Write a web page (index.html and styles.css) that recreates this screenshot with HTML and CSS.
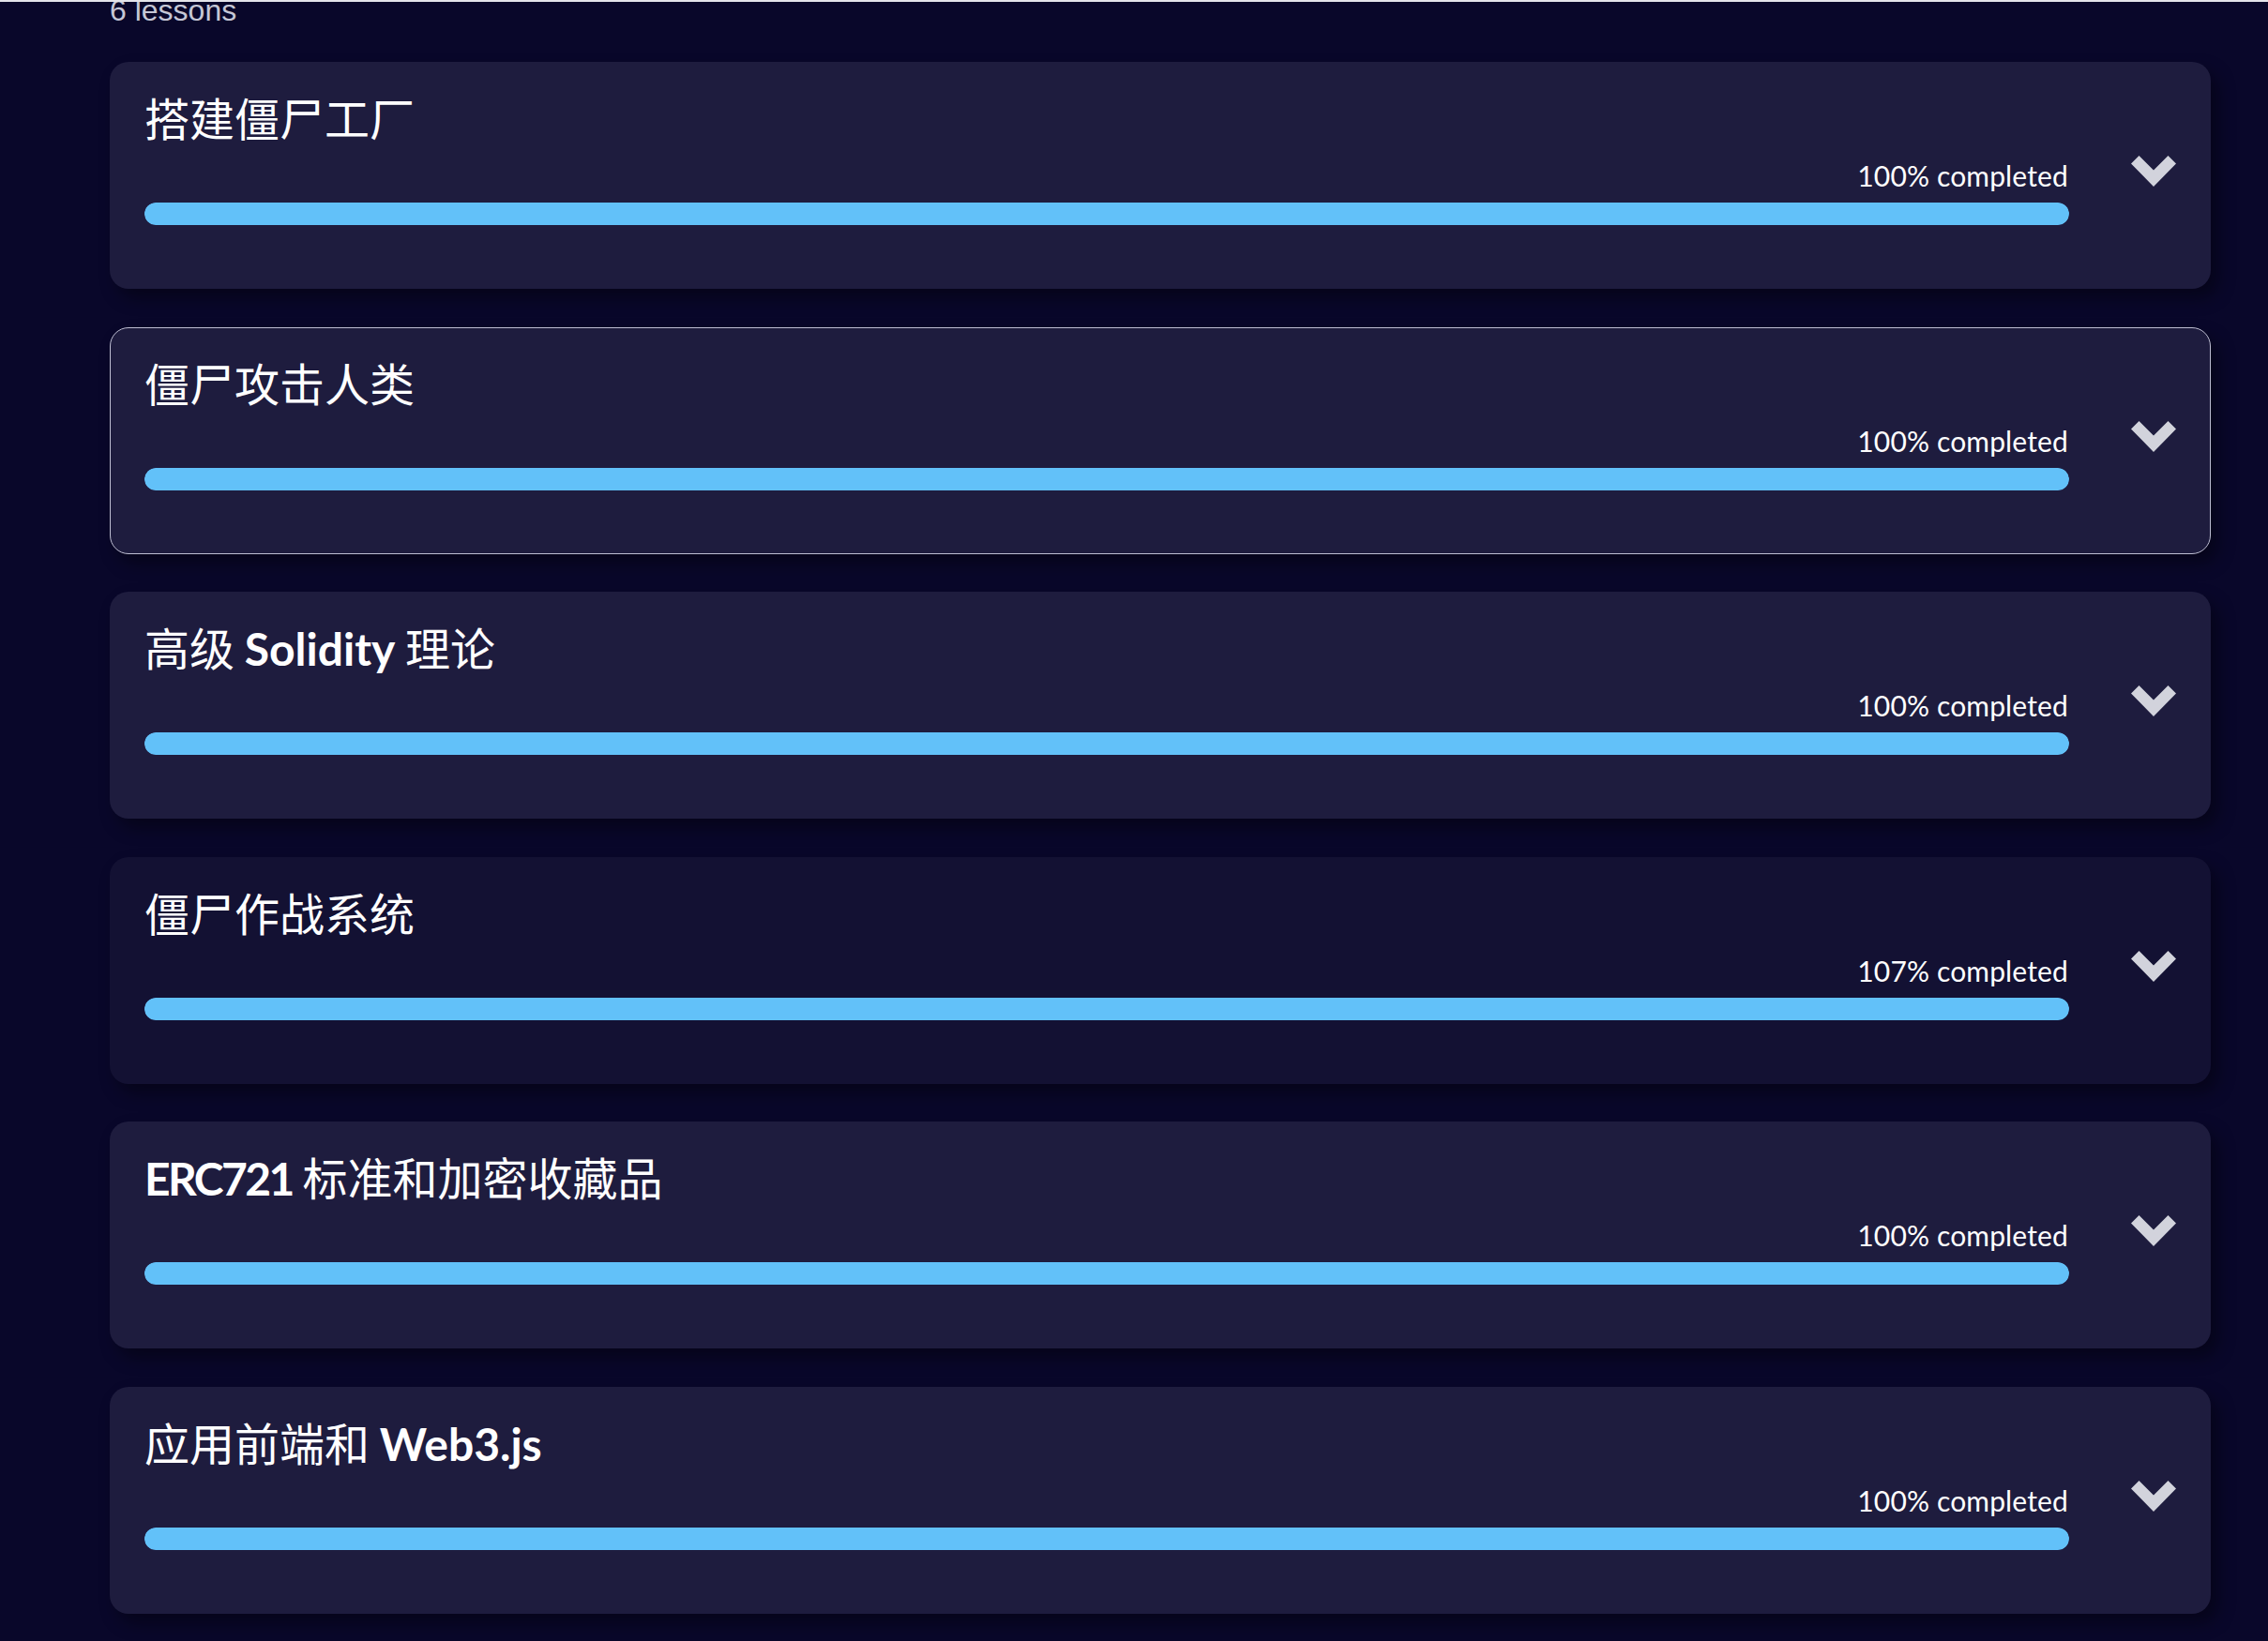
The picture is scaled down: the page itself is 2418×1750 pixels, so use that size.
FILE: index.html
```html
<!DOCTYPE html>
<html lang="zh">
<head>
<meta charset="utf-8">
<title>Lessons</title>
<link rel="stylesheet" href="styles.css">
</head>
<body>
<div class="top-strip"></div>
<main class="course">
  <div class="lesson-count">6 lessons</div>
  <div class="lesson-list">
    <section class="lesson">
      <div class="lesson-main">
        <h2 class="lesson-title">搭建僵尸工厂</h2>
        <div class="progress-label">100% completed</div>
        <div class="progress-track"><div class="progress-fill" style="width:100%"></div></div>
      </div>
      <svg class="chevron" viewBox="0 0 48 33" width="48" height="33" aria-hidden="true"><polygon points="0,8.5 8.5,0 24,15.5 39.5,0 48,8.5 24,33"/></svg>
    </section>
    <section class="lesson lesson-focused">
      <div class="lesson-main">
        <h2 class="lesson-title">僵尸攻击人类</h2>
        <div class="progress-label">100% completed</div>
        <div class="progress-track"><div class="progress-fill" style="width:100%"></div></div>
      </div>
      <svg class="chevron" viewBox="0 0 48 33" width="48" height="33" aria-hidden="true"><polygon points="0,8.5 8.5,0 24,15.5 39.5,0 48,8.5 24,33"/></svg>
    </section>
    <section class="lesson">
      <div class="lesson-main">
        <h2 class="lesson-title">高级 <span class="latin">Solidity</span> 理论</h2>
        <div class="progress-label">100% completed</div>
        <div class="progress-track"><div class="progress-fill" style="width:100%"></div></div>
      </div>
      <svg class="chevron" viewBox="0 0 48 33" width="48" height="33" aria-hidden="true"><polygon points="0,8.5 8.5,0 24,15.5 39.5,0 48,8.5 24,33"/></svg>
    </section>
    <section class="lesson lesson-hover">
      <div class="lesson-main">
        <h2 class="lesson-title">僵尸作战系统</h2>
        <div class="progress-label">107% completed</div>
        <div class="progress-track"><div class="progress-fill" style="width:100%"></div></div>
      </div>
      <svg class="chevron" viewBox="0 0 48 33" width="48" height="33" aria-hidden="true"><polygon points="0,8.5 8.5,0 24,15.5 39.5,0 48,8.5 24,33"/></svg>
    </section>
    <section class="lesson">
      <div class="lesson-main">
        <h2 class="lesson-title"><span class="latin tight">ERC721</span> 标准和加密收藏品</h2>
        <div class="progress-label">100% completed</div>
        <div class="progress-track"><div class="progress-fill" style="width:100%"></div></div>
      </div>
      <svg class="chevron" viewBox="0 0 48 33" width="48" height="33" aria-hidden="true"><polygon points="0,8.5 8.5,0 24,15.5 39.5,0 48,8.5 24,33"/></svg>
    </section>
    <section class="lesson">
      <div class="lesson-main">
        <h2 class="lesson-title">应用前端和 <span class="latin">Web3.js</span></h2>
        <div class="progress-label">100% completed</div>
        <div class="progress-track"><div class="progress-fill" style="width:100%"></div></div>
      </div>
      <svg class="chevron" viewBox="0 0 48 33" width="48" height="33" aria-hidden="true"><polygon points="0,8.5 8.5,0 24,15.5 39.5,0 48,8.5 24,33"/></svg>
    </section>
  </div>
</main>
</body>
</html>
```

FILE: styles.css
```css
* {
  box-sizing: border-box;
}

html, body {
  margin: 0;
  padding: 0;
}

body {
  background: #09072a;
  color: #ffffff;
  font-family: "Lato", "Noto Sans CJK SC", sans-serif;
  min-height: 1750px;
  overflow: hidden;
}

.top-strip {
  position: relative;
  z-index: 1;
  height: 2px;
  background: #e4e4ea;
}

.course {
  padding-left: 117px;
  width: 2357px;
}

.lesson-count {
  font-family: "Liberation Sans", Arial, sans-serif;
  font-size: 32px;
  line-height: 18px;
  height: 18px;
  color: #c6c7d6;
  margin-bottom: 46px;
}

.lesson-list {
  display: flex;
  flex-direction: column;
  gap: 40.6px;
}

.lesson {
  display: flex;
  align-items: flex-start;
  gap: 66px;
  height: 242px;
  padding: 34px 36px 68px 36px;
  background: #1e1c3e;
  border: 1px solid transparent;
  border-radius: 20px;
  box-shadow: 8px 10px 18px rgba(0, 0, 0, 0.38);
}

.lesson-focused {
  border-color: #bebed2;
}

.lesson-hover {
  background: #131133;
}

.lesson-main {
  flex: 1;
  display: flex;
  flex-direction: column;
}

.lesson-title {
  margin: -1px 0 0 0;
  font-family: "Noto Sans CJK SC", sans-serif;
  font-weight: 400;
  font-size: 48px;
  line-height: 48px;
  height: 48px;
  color: #ffffff;
  white-space: nowrap;
}

.latin {
  font-family: "Lato", sans-serif;
  font-weight: 700;
}

.latin.tight {
  letter-spacing: -2.6px;
}

.progress-label {
  margin-top: 24px;
  font-size: 30px;
  line-height: 30px;
  height: 30px;
  text-align: right;
  color: #ffffff;
  padding-right: 1px;
  letter-spacing: 0.15px;
}

.progress-track {
  margin-top: 14px;
  height: 24px;
  border-radius: 12px;
  background: #34325a;
  overflow: hidden;
}

.progress-fill {
  height: 100%;
  border-radius: 12px;
  background: #62c1f9;
}

.chevron {
  flex: none;
  margin-top: 65px;
  fill: #d2d3dc;
}
```
